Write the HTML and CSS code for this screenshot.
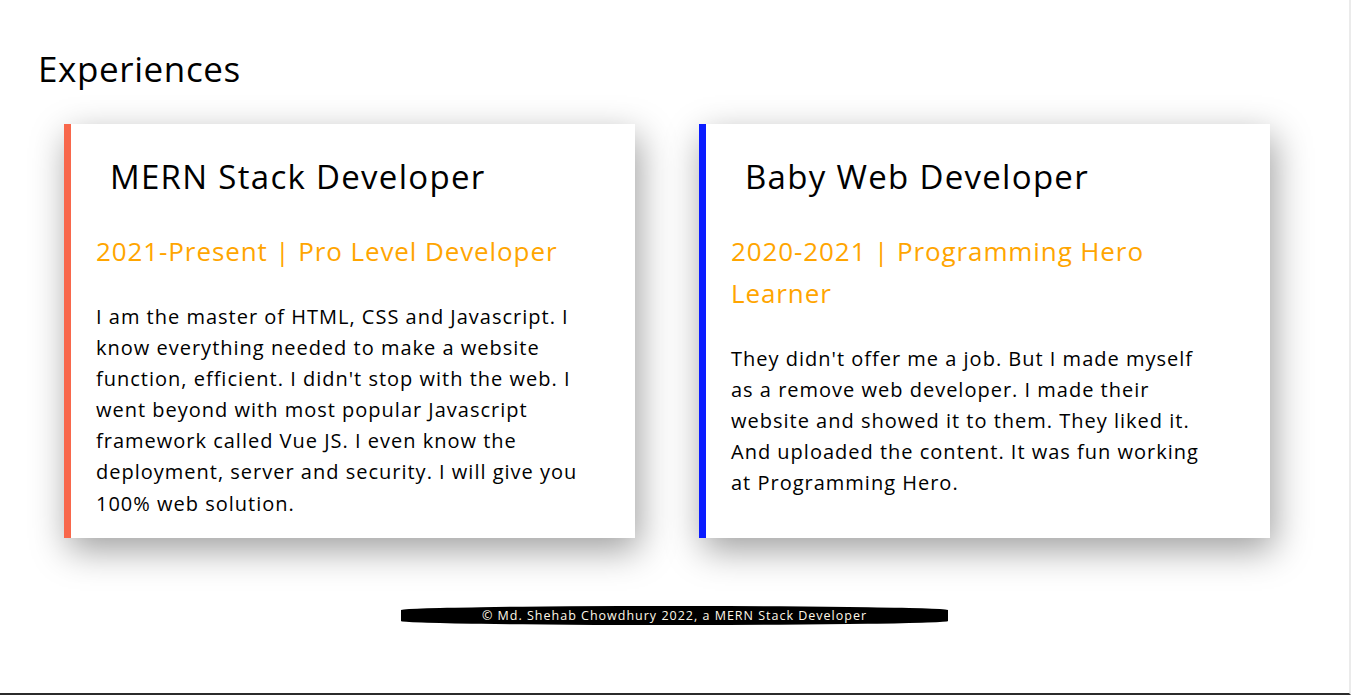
FILE: index.html
```html
<!DOCTYPE html>
<html lang="en">
<head>
<meta charset="utf-8">
<title>Experiences</title>
<link rel="stylesheet" href="styles.css">
</head>
<body>
<div class="page">
  <section class="experiences">
    <h1 class="section-title">Experiences</h1>
    <div class="cards">
      <article class="card card-orange">
        <h2 class="card-title">MERN Stack Developer</h2>
        <h3 class="card-sub">2021-Present | Pro Level Developer</h3>
        <p class="card-text">I am the master of HTML, CSS and Javascript. I know everything needed to make a website function, efficient. I didn't stop with the web. I went beyond with most popular Javascript framework called Vue JS. I even know the deployment, server and security. I will give you 100% web solution.</p>
      </article>
      <article class="card card-blue">
        <h2 class="card-title">Baby Web Developer</h2>
        <h3 class="card-sub">2020-2021 | Programming Hero Learner</h3>
        <p class="card-text">They didn't offer me a job. But I made myself as a remove web developer. I made their website and showed it to them. They liked it. And uploaded the content. It was fun working at Programming Hero.</p>
      </article>
    </div>
  </section>
  <footer class="footer">
    <p class="footer-bar">© Md. Shehab Chowdhury 2022, a MERN Stack Developer</p>
  </footer>
</div>
</body>
</html>
```

FILE: styles.css
```css
* { box-sizing: border-box; }
html, body { margin: 0; padding: 0; background: #fff; }
body {
  font-family: "Open Sans", "Noto Sans", sans-serif;
  color: #000;
}
.page {
  height: 695px;
  border-right: 2px solid #ebebeb;
  border-bottom: 2px solid #2b2b2b;
  display: flex;
  flex-direction: column;
  overflow: hidden;
}
.experiences {
  padding: 47px 0 0 38px;
}
.section-title {
  margin: 0;
  font-size: 35px;
  font-weight: 500;
  letter-spacing: 0.6px;
  line-height: 44px;
}
.cards {
  display: flex;
  gap: 64px;
  margin-top: 33px;
  padding-left: 26px;
}
.card {
  width: 571px;
  height: 414px;
  background: #fff;
  box-shadow: 4px 12px 34px rgba(0, 0, 0, 0.38);
  padding: 30px 0 0 25px;
}
.card-orange { border-left: 7px solid #f8674b; }
.card-blue { border-left: 7px solid #0a1cff; }
.card-title {
  margin: 0 0 0 14px;
  font-size: 33px;
  font-weight: 500;
  letter-spacing: 1.3px;
  line-height: 46px;
}
.card-sub {
  margin: 30px 0 0;
  width: 470px;
  font-size: 26px;
  font-weight: 500;
  letter-spacing: 0.9px;
  line-height: 42px;
  color: #ffa500;
}
.card-text {
  margin: 29px 0 0;
  width: 486px;
  font-size: 20px;
  letter-spacing: 1px;
  line-height: 31.1px;
}
.footer {
  display: flex;
  justify-content: center;
  margin-top: 68px;
}
.footer-bar {
  margin: 0;
  width: 547px;
  height: 19px;
  background: #000;
  color: #fff8e8;
  border-radius: 50% / 4px;
  font-size: 12.5px;
  letter-spacing: 1px;
  line-height: 19px;
  text-align: center;
}
```
